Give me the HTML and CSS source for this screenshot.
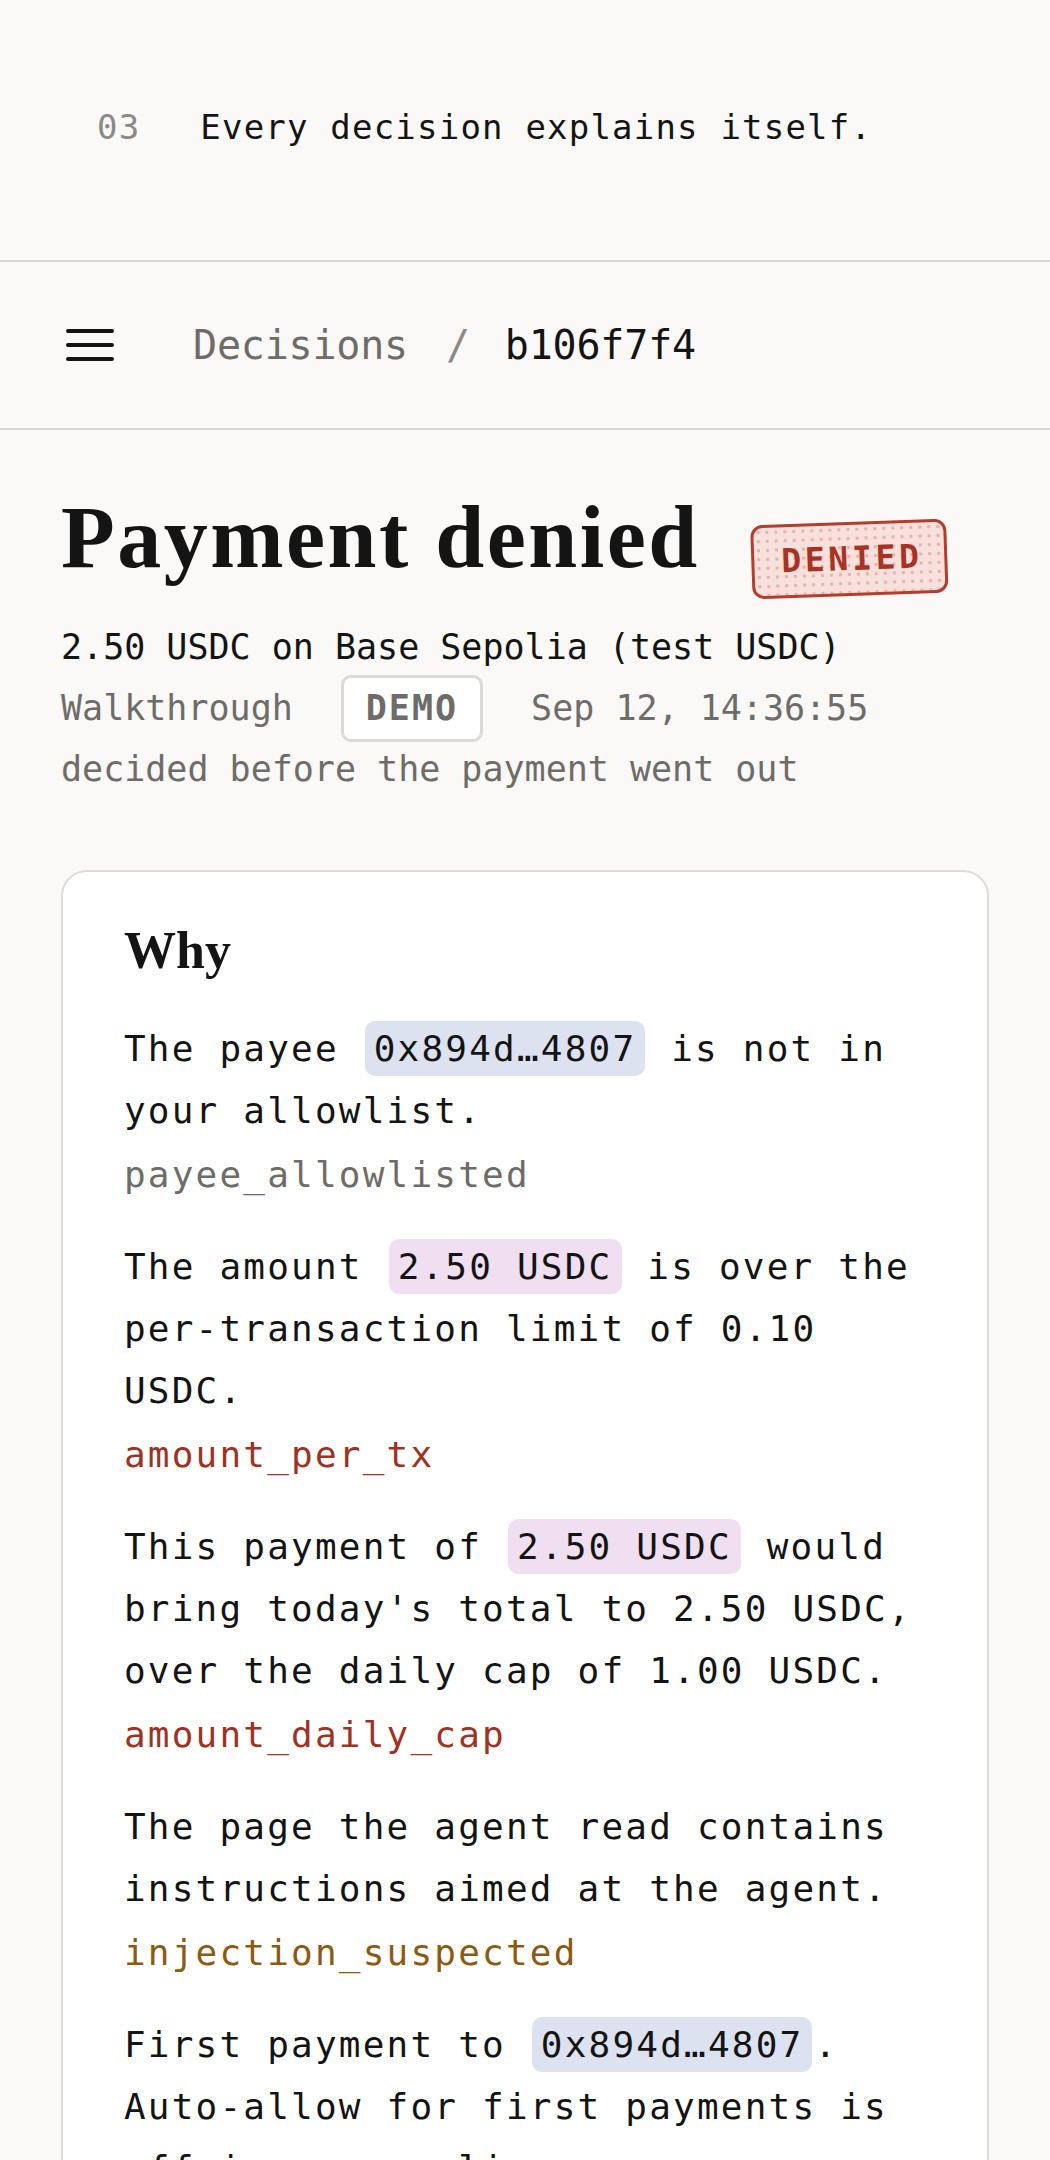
FILE: index.html
```html
<!DOCTYPE html>
<html lang="en">
<head>
    <meta charset="UTF-8">
    <meta name="viewport" content="width=device-width, initial-scale=1.0">
    <title>Decision b106f7f4</title>
    <link rel="stylesheet" href="styles.css">
</head>
<body>
    <header class="intro">
        <span class="step">03</span>
        <span class="lede">Every decision explains itself.</span>
    </header>

    <nav class="crumbs">
        <button class="menu" aria-label="Menu">
            <svg width="48" height="34" viewBox="0 0 48 34">
                <path d="M2 3 H46 M2 17 H46 M2 31 H46" stroke="#141414" stroke-width="4" stroke-linecap="round" fill="none"/>
            </svg>
        </button>
        <a class="crumb-link" href="#">Decisions</a>
        <span class="sep">/</span>
        <span class="crumb-current">b106f7f4</span>
    </nav>

    <main class="decision">
        <div class="title-row">
            <h1>Payment denied</h1>
            <span class="stamp">DENIED</span>
        </div>
        <p class="amount">2.50 USDC on Base Sepolia (test USDC)</p>
        <div class="meta">
            <span>Walkthrough</span>
            <span class="tag">DEMO</span>
            <span>Sep 12, 14:36:55</span>
        </div>
        <p class="when">decided before the payment went out</p>

        <section class="card">
            <h2>Why</h2>

            <div class="reason">
                <p>The payee <code class="chip addr">0x894d…4807</code> is not in your allowlist.</p>
                <span class="rule">payee_allowlisted</span>
            </div>

            <div class="reason">
                <p>The amount <code class="chip sum">2.50 USDC</code> is over the per-transaction limit of 0.10 USDC.</p>
                <span class="rule rule-red">amount_per_tx</span>
            </div>

            <div class="reason">
                <p>This payment of <code class="chip sum">2.50 USDC</code> would bring today's total to 2.50 USDC, over the daily cap of 1.00 USDC.</p>
                <span class="rule rule-red">amount_daily_cap</span>
            </div>

            <div class="reason">
                <p>The page the agent read contains instructions aimed at the agent.</p>
                <span class="rule rule-warn">injection_suspected</span>
            </div>

            <div class="reason">
                <p>First payment to <code class="chip addr">0x894d…4807</code>. Auto-allow for first payments is off in your policy.</p>
                <span class="rule">first_payment</span>
            </div>
        </section>
    </main>
</body>
</html>
```

FILE: styles.css
```css
html, body {
    margin: 0;
    padding: 0;
}
body {
    height: 2160px;
    overflow: hidden;
    background-color: #faf9f7;
    color: #141414;
    font-family: "DejaVu Sans Mono", "Liberation Mono", monospace;
}

/* top strip */
.intro {
    display: flex;
    align-items: center;
    gap: 60px;
    height: 254px;
    padding: 0 0 6px 97px;
    border-bottom: 2px solid #d8d6d3;
    font-size: 34px;
    letter-spacing: 1.2px;
}
.step {
    color: #8b8986;
}

/* breadcrumbs */
.crumbs {
    display: flex;
    align-items: center;
    height: 166px;
    padding-left: 66px;
    border-bottom: 2px solid #d8d6d3;
    font-size: 40px;
    letter-spacing: -0.2px;
}
.menu {
    display: flex;
    padding: 0;
    margin-right: 79px;
    border: 0;
    background: none;
}
.crumb-link {
    color: #6e6c69;
    text-decoration: none;
}
.sep {
    margin: 0 35px 0 38px;
    color: #8b8986;
}

/* decision header */
.decision {
    padding: 60px 61px 0;
}
.title-row {
    display: flex;
    align-items: flex-end;
    gap: 51px;
}
h1 {
    margin: 0;
    font-family: "Liberation Serif", serif;
    font-size: 88px;
    font-weight: bold;
    line-height: 1.1;
    letter-spacing: 2.5px;
}
.stamp {
    padding: 14px 22px 14px 27px;
    border: 3px solid #b13e2f;
    border-radius: 12px;
    background-color: #f8e0dc;
    background-image: radial-gradient(circle, rgba(177, 62, 47, 0.28) 1.4px, transparent 1.8px);
    background-size: 9px 9px;
    color: #a83325;
    font-size: 33px;
    font-weight: bold;
    letter-spacing: 3.7px;
    line-height: 40px;
    transform: rotate(-2deg) translateY(9px);
}
.amount, .when {
    margin: 0;
    font-size: 35px;
    line-height: 61px;
}
.amount {
    margin-top: 30px;
}
.meta {
    display: flex;
    align-items: center;
    gap: 48px;
    height: 61px;
    color: #6e6c69;
    font-size: 35px;
}
.tag {
    padding: 0 22px;
    border: 3px solid #dcdad6;
    border-radius: 10px;
    background-color: #fff;
    font-weight: bold;
    line-height: 61px;
    letter-spacing: 2px;
}
.when {
    color: #6e6c69;
}

/* reasons card */
.card {
    margin-top: 70px;
    padding: 48px 61px 60px;
    border: 2px solid #dedcd9;
    border-radius: 26px;
    background-color: #fff;
}
h2 {
    margin: 0 0 36px;
    font-family: "Liberation Serif", serif;
    font-size: 52px;
    font-weight: bold;
    line-height: 1.2;
}
.reason {
    margin-bottom: 30px;
    font-size: 36px;
    line-height: 62px;
    letter-spacing: 2.2px;
}
.reason p {
    margin: 0;
}
.chip {
    padding: 7px 9px;
    margin: 0 2px;
    border-radius: 10px;
    font-family: inherit;
    font-size: inherit;
}
.addr {
    background-color: #dde2f0;
}
.sum {
    background-color: #efdff0;
}
.rule {
    display: block;
    margin-top: 2px;
    color: #6e6c69;
}
.rule-red {
    color: #9c3325;
}
.rule-warn {
    color: #8c5a12;
}
```
